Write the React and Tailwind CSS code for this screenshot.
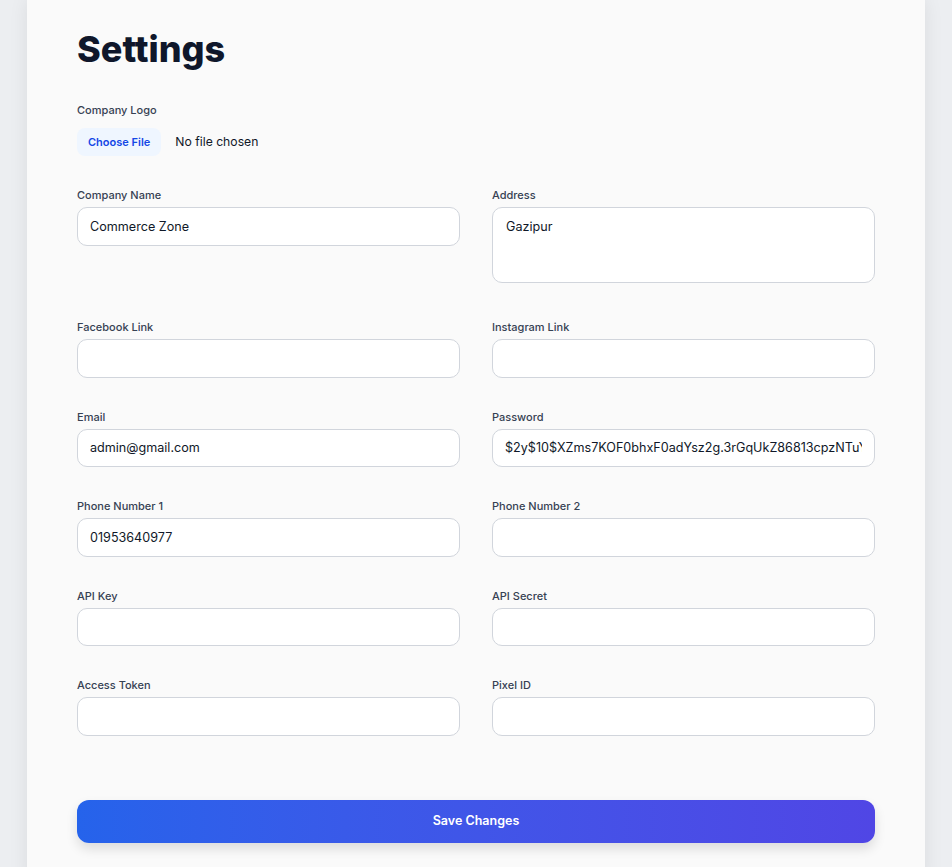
import {useState} from "react";

const Field = ({label, value, textarea}) => {
    const [val, setVal] = useState(value || '');
    return (
        <div className="flex flex-col">
            <label className="text-[11px] font-medium leading-4 text-gray-700 mb-1">{label}</label>
            {textarea ?
                <textarea className="block h-[76px] mb-[5px] rounded-[10px] border border-gray-300 bg-white px-[13px] py-[10px] text-[12.6px] text-gray-900 resize-none outline-none"
                          value={val} onChange={e => setVal(e.target.value)}/>
                :
                <input className="h-[38.5px] rounded-[10px] border border-gray-300 bg-white px-[12px] text-[12.6px] text-gray-900 outline-none"
                       value={val} onChange={e => setVal(e.target.value)}/>
            }
        </div>
    )
}

const App = () => {
    return (
        <div className="min-h-[867px] bg-[#eceef1]" style={{fontFamily: "Inter, 'Liberation Sans', sans-serif"}}>
            <div className="mx-auto w-[898px] min-h-[867px] bg-[#fafafa] shadow-[0_0_18px_rgba(0,0,0,0.08)] px-[50px] pt-[29px] pb-10">
                <h1 className="text-[36px] leading-10 font-extrabold text-slate-900">Settings</h1>

                <div className="mt-[33px] flex flex-col">
                    <label className="text-[11px] font-medium leading-4 text-gray-700 mb-[10px]">Company Logo</label>
                    <div className="flex items-center">
                        <button className="h-[28px] px-[11px] rounded-lg bg-blue-50 text-[11px] font-semibold text-blue-700">
                            Choose File
                        </button>
                        <span className="ml-[14px] text-[12.2px] text-gray-900">No file chosen</span>
                    </div>
                </div>

                <div className="mt-[31px] grid grid-cols-2 gap-x-8 gap-y-[31px]">
                    <Field label="Company Name" value="Commerce Zone"/>
                    <Field label="Address" value="Gazipur" textarea/>
                    <Field label="Facebook Link"/>
                    <Field label="Instagram Link"/>
                    <Field label="Email" value="admin@gmail.com"/>
                    <Field label="Password" value="$2y$10$XZms7KOF0bhxF0adYsz2g.3rGqUkZ86813cpzNTuYi$"/>
                    <Field label="Phone Number 1" value="01953640977"/>
                    <Field label="Phone Number 2"/>
                    <Field label="API Key"/>
                    <Field label="API Secret"/>
                    <Field label="Access Token"/>
                    <Field label="Pixel ID"/>
                </div>

                <button className="mt-16 w-full h-[43px] rounded-xl bg-gradient-to-r from-[#2563eb] to-[#5046e5] text-[12.5px] font-semibold text-white shadow-[0_6px_12px_rgba(0,0,0,0.12)]">
                    Save Changes
                </button>
            </div>
        </div>
    )
}

export default App;
